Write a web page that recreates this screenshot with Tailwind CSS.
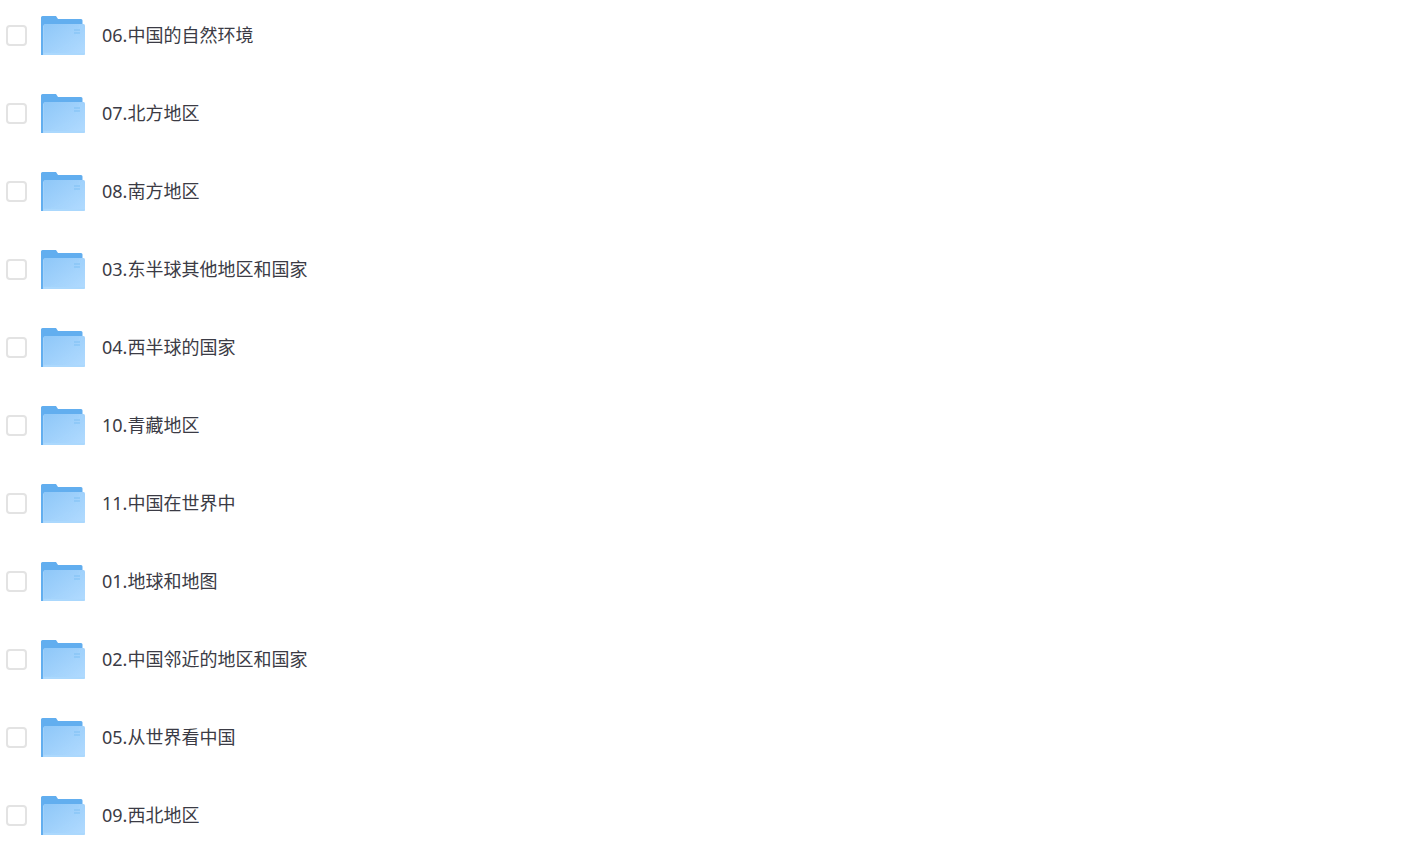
<!DOCTYPE html>
<html lang="zh">
<head>
    <meta charset="UTF-8">
    <title>文件列表</title>
    <script src="https://cdn.jsdelivr.net/npm/@tailwindcss/browser@4"></script>
</head>
<body class="bg-white overflow-hidden h-[865px]">
    <svg width="0" height="0" class="absolute">
        <defs>
            <linearGradient id="folderFront" x1="0" y1="0" x2="1" y2="1">
                <stop offset="0" stop-color="#8ec7f8"/>
                <stop offset="1" stop-color="#b2dbff"/>
            </linearGradient>
            <symbol id="folder" viewBox="0 0 44 40">
                <path d="M0 2.500q0-1.500 1.500-1.500h13.500l2 3h23q1.500 0 1.500 1.500v5h-41v29.500h-.5z" fill="#62aeef"/>
                <path d="M0 5h2.500v35h-2.500z" fill="#62aeef"/>
                <path d="M3.500 9h39q1.500 0 1.500 1.500v28q0 1.500-1.500 1.500h-40v-29.500q0-1.500 1-1.500z" fill="url(#folderFront)"/>
                <path d="M3 38q14-1 24-9t12-19M10 38q12-2 20-9t11-18M19 38q10-2 16-8t8-13" fill="none" stroke="#a6d5fc" stroke-width=".7" opacity=".6"/>
                <path d="M2.500 38h41.500v.5q0 1.500-1.500 1.500h-40z" fill="#abd8fd"/>
                <path d="M33 14.500h6v1h-6zM33 17.500h6v1h-6z" fill="#7fc0f3"/>
            </symbol>
        </defs>
    </svg>
    <ul id="lista" class="-mt-1 font-['Noto_Sans','Noto_Sans_CJK_SC',sans-serif] text-[18px] text-[#3b3b45]">
        <li class="flex items-center h-[78px]">
            <span class="ml-[6px] w-[21px] h-[21px] border-2 border-[#e3e3e3] rounded-[4px]"></span>
            <svg class="ml-[14px] w-[44px] h-[40px]"><use href="#folder"/></svg>
            <span class="ml-[17px]">06.中国的自然环境</span>
        </li>
        <li class="flex items-center h-[78px]">
            <span class="ml-[6px] w-[21px] h-[21px] border-2 border-[#e3e3e3] rounded-[4px]"></span>
            <svg class="ml-[14px] w-[44px] h-[40px]"><use href="#folder"/></svg>
            <span class="ml-[17px]">07.北方地区</span>
        </li>
        <li class="flex items-center h-[78px]">
            <span class="ml-[6px] w-[21px] h-[21px] border-2 border-[#e3e3e3] rounded-[4px]"></span>
            <svg class="ml-[14px] w-[44px] h-[40px]"><use href="#folder"/></svg>
            <span class="ml-[17px]">08.南方地区</span>
        </li>
        <li class="flex items-center h-[78px]">
            <span class="ml-[6px] w-[21px] h-[21px] border-2 border-[#e3e3e3] rounded-[4px]"></span>
            <svg class="ml-[14px] w-[44px] h-[40px]"><use href="#folder"/></svg>
            <span class="ml-[17px]">03.东半球其他地区和国家</span>
        </li>
        <li class="flex items-center h-[78px]">
            <span class="ml-[6px] w-[21px] h-[21px] border-2 border-[#e3e3e3] rounded-[4px]"></span>
            <svg class="ml-[14px] w-[44px] h-[40px]"><use href="#folder"/></svg>
            <span class="ml-[17px]">04.西半球的国家</span>
        </li>
        <li class="flex items-center h-[78px]">
            <span class="ml-[6px] w-[21px] h-[21px] border-2 border-[#e3e3e3] rounded-[4px]"></span>
            <svg class="ml-[14px] w-[44px] h-[40px]"><use href="#folder"/></svg>
            <span class="ml-[17px]">10.青藏地区</span>
        </li>
        <li class="flex items-center h-[78px]">
            <span class="ml-[6px] w-[21px] h-[21px] border-2 border-[#e3e3e3] rounded-[4px]"></span>
            <svg class="ml-[14px] w-[44px] h-[40px]"><use href="#folder"/></svg>
            <span class="ml-[17px]">11.中国在世界中</span>
        </li>
        <li class="flex items-center h-[78px]">
            <span class="ml-[6px] w-[21px] h-[21px] border-2 border-[#e3e3e3] rounded-[4px]"></span>
            <svg class="ml-[14px] w-[44px] h-[40px]"><use href="#folder"/></svg>
            <span class="ml-[17px]">01.地球和地图</span>
        </li>
        <li class="flex items-center h-[78px]">
            <span class="ml-[6px] w-[21px] h-[21px] border-2 border-[#e3e3e3] rounded-[4px]"></span>
            <svg class="ml-[14px] w-[44px] h-[40px]"><use href="#folder"/></svg>
            <span class="ml-[17px]">02.中国邻近的地区和国家</span>
        </li>
        <li class="flex items-center h-[78px]">
            <span class="ml-[6px] w-[21px] h-[21px] border-2 border-[#e3e3e3] rounded-[4px]"></span>
            <svg class="ml-[14px] w-[44px] h-[40px]"><use href="#folder"/></svg>
            <span class="ml-[17px]">05.从世界看中国</span>
        </li>
        <li class="flex items-center h-[78px]">
            <span class="ml-[6px] w-[21px] h-[21px] border-2 border-[#e3e3e3] rounded-[4px]"></span>
            <svg class="ml-[14px] w-[44px] h-[40px]"><use href="#folder"/></svg>
            <span class="ml-[17px]">09.西北地区</span>
        </li>
    </ul>
</body>
</html>
